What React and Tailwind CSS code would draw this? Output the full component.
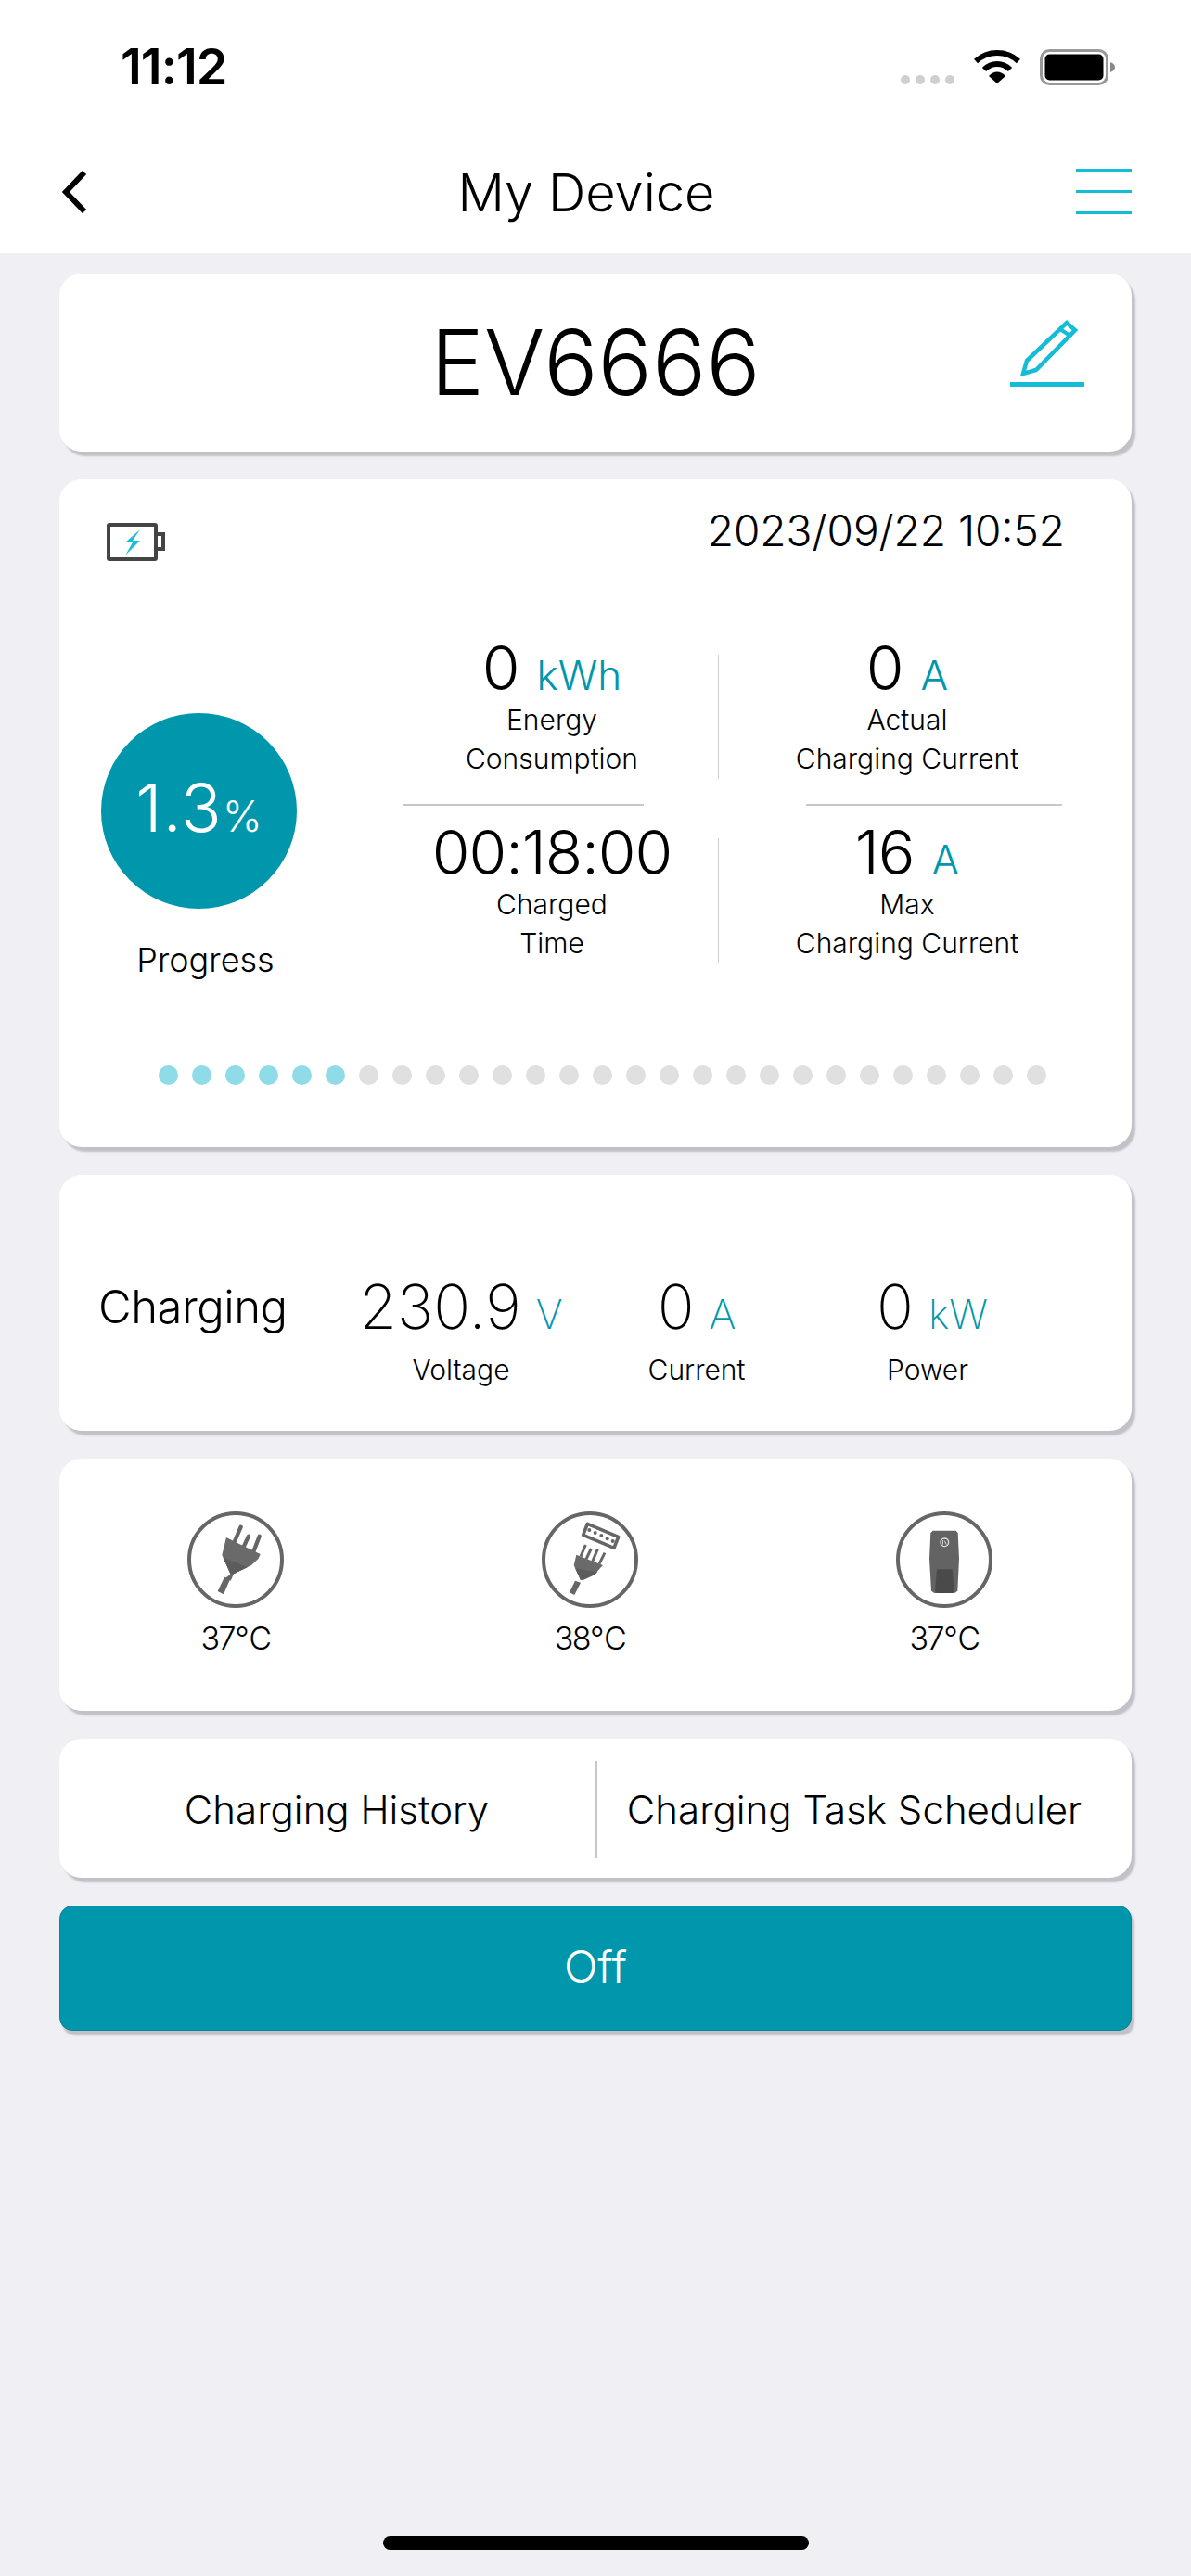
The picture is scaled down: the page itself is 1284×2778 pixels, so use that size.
import React from 'react';

const card = 'bg-white rounded-[24px] shadow-[4px_5px_2px_#c1c1c7]';

const Wifi = () => (
  <svg width="50" height="37" viewBox="0 0 50 37">
    <path d="M2 13 C15 1 35 1 48 13" fill="none" stroke="#000" strokeWidth="6" />
    <path d="M11 22 C19 14 31 14 39 22" fill="none" stroke="#000" strokeWidth="6" />
    <path d="M16 29 C21 23 29 23 34 29 L25 37 Z" fill="#000" />
  </svg>
);

const StatusBattery = () => (
  <svg width="81" height="39" viewBox="0 0 81 39">
    <rect x="1.5" y="1.5" width="71" height="36" rx="9" fill="none" stroke="#999" strokeWidth="3" />
    <rect x="5.5" y="5.5" width="63" height="28" rx="5" fill="#000" />
    <path d="M76 14 C79 15 81 17 81 19.5 C81 22 79 24 76 25 Z" fill="#888" />
  </svg>
);

const Chevron = () => (
  <svg width="30" height="48" viewBox="0 0 30 48">
    <path d="M25 3 L5 24 L25 45" fill="none" stroke="#000" strokeWidth="6" />
  </svg>
);

const Menu = () => (
  <div className="flex flex-col gap-[20px] w-[60px]">
    <div className="h-[3px] bg-[#14bcd6]" />
    <div className="h-[3px] bg-[#14bcd6]" />
    <div className="h-[3px] bg-[#14bcd6]" />
  </div>
);

const Pencil = () => (
  <svg width="80" height="75" viewBox="0 0 80 75">
    <path d="M18 47 L61 6 L70 14 L28 57 L14 61 Z" fill="none" stroke="#14bcd6" strokeWidth="4.5" />
    <path d="M54 13 L66 21" fill="none" stroke="#14bcd6" strokeWidth="4" />
    <rect x="0" y="70" width="80" height="5" fill="#14bcd6" />
  </svg>
);

const BatteryIcon = () => (
  <svg width="66" height="46" viewBox="0 0 66 46">
    <rect x="3" y="5" width="51" height="37" rx="1" fill="none" stroke="#444" strokeWidth="4" />
    <path d="M55 15 H62 V31 H55" fill="none" stroke="#444" strokeWidth="4" />
    <path d="M37 10 L21 24 H29 L21 38 L37 22 H29 Z" fill="#1fbcd8" />
  </svg>
);

const PlugIcon = () => (
  <svg width="104" height="104" viewBox="128 88 312 312">
    <circle cx="284" cy="244" r="150" fill="none" stroke="#666" strokeWidth="12" />
    <g stroke="#666" strokeWidth="13" strokeLinecap="round" fill="none">
      <path d="M301 138 L282 182" />
      <path d="M326 168 L311 200" />
      <path d="M361 168 L342 218" />
    </g>
    <path d="M254 172 L364 226 L358 240 L335 262 L282 288 L268 292 L240 228 L248 196 Z" fill="#6a6a6a" />
    <path d="M243 236 L322 269 L282 288 L268 292 Z" fill="#5c5c5c" />
    <path d="M268 290 L280 285 L268 312 L250 305 Z" fill="#666" />
    <path d="M248 300 L266 308 L245 356 L226 346 Z" fill="#666" />
  </svg>
);

const PinIcon = () => (
  <svg width="104" height="104" viewBox="132 88 312 312">
    <circle cx="288" cy="244" r="150" fill="none" stroke="#666" strokeWidth="12" />
    <path d="M280 128 L380 170 L366 206 L266 164 Z" fill="none" stroke="#666" strokeWidth="11" strokeLinejoin="round" />
    <g fill="#666">
      <circle cx="286" cy="148" r="6" />
      <circle cx="305" cy="157" r="6" />
      <circle cx="325" cy="166" r="6" />
      <circle cx="344" cy="176" r="6" />
      <circle cx="362" cy="184" r="6" />
    </g>
    <g stroke="#666" strokeWidth="9" fill="none">
      <path d="M274 196 L258 234" />
      <path d="M292 208 L276 242" />
      <path d="M313 210 L296 250" />
      <path d="M336 222 L318 258" />
    </g>
    <path d="M244 228 L330 262 L322 270 L304 292 L270 308 L258 310 L236 262 Z" fill="#6a6a6a" />
    <path d="M240 272 L312 284 L304 292 L270 308 L258 310 Z" fill="#5c5c5c" />
    <path d="M240 312 L258 318 L238 358 L222 350 Z" fill="#666" />
  </svg>
);

const WallboxIcon = () => (
  <svg width="104" height="104" viewBox="136 88 312 312">
    <circle cx="292" cy="244" r="150" fill="none" stroke="#666" strokeWidth="12" />
    <path d="M255 150 H330 L336 158 L340 240 L335 345 L325 352 H260 L250 345 L244 240 L248 158 Z" fill="#636363" />
    <path d="M268 275 H318 L324 345 L318 352 H268 L262 345 Z" fill="#4a4a4a" />
    <circle cx="293" cy="188" r="13" fill="none" stroke="#ddd" strokeWidth="4" />
    <path d="M287 181 V195 M293 183 L299 195" stroke="#ddd" strokeWidth="3" fill="none" />
  </svg>
);

const StatCell = ({ value, unit, line1, line2 }) => (
  <div className="flex flex-col items-center">
    <div className="h-[62px] flex items-baseline justify-center leading-[62px] whitespace-nowrap">
      <span className="text-[66px] font-[350] tracking-[-1px] text-black">{value}</span>
      {unit && <span className="text-[44px] font-light text-[#0096ac] ml-[19px]">{unit}</span>}
    </div>
    <div className="text-[30px] leading-[42px] text-black font-[350] text-center mt-[4px] whitespace-nowrap">
      {line1}
      <br />
      {line2}
    </div>
  </div>
);

const Reading = ({ value, unit, label, className, labelClass = '' }) => (
  <div className={`flex flex-col items-center ${className}`}>
    <div className="flex items-baseline leading-[64px]">
      <span className="text-[66px] font-extralight text-black">{value}</span>
      <span className="text-[44px] font-extralight text-[#0096ac] ml-[16px]">{unit}</span>
    </div>
    <div className={`text-[30px] leading-[40px] font-[350] text-black mt-[8px] ${labelClass}`}>{label}</div>
  </div>
);

const Temp = ({ icon, value }) => (
  <div className="w-[104px] flex flex-col items-center">
    {icon}
    <div className="text-[34px] leading-[44px] font-light tracking-[-1.5px] text-black mt-[11px] whitespace-nowrap">{value}</div>
  </div>
);

const App = () => {
  const dots = Array.from({ length: 27 }, (_, i) => i);

  return (
    <div className="w-[1284px] h-[2778px] bg-[#efeff4] flex flex-col overflow-hidden font-['Inter','Noto_Sans',sans-serif]">
      {/* status bar + nav */}
      <div className="h-[273px] bg-white shrink-0">
        <div className="h-[146px] pl-[130px] pr-[82px] flex items-start justify-between">
          <div className="text-[54px] leading-[60px] font-semibold tracking-[-1px] text-black mt-[42px]">11:12</div>
          <div className="flex items-start mt-[53px]">
            <div className="flex gap-[6px] mt-[28px] mr-[21px]">
              <div className="w-[10px] h-[10px] rounded-full bg-[#cfcfcf]" />
              <div className="w-[10px] h-[10px] rounded-full bg-[#cfcfcf]" />
              <div className="w-[10px] h-[10px] rounded-full bg-[#cfcfcf]" />
              <div className="w-[10px] h-[10px] rounded-full bg-[#cfcfcf]" />
            </div>
            <Wifi />
            <div className="ml-[21px]">
              <StatusBattery />
            </div>
          </div>
        </div>
        <div className="h-[127px] pl-[66px] pr-[64px] flex items-start justify-between">
          <div className="mt-[37px]"><Chevron /></div>
          <div className="text-[56px] leading-[68px] font-[350] text-black mt-[28px] ml-[8px]">My Device</div>
          <div className="mt-[36px]"><Menu /></div>
        </div>
      </div>

      <div className="px-[64px] pt-[22px] flex flex-col gap-[30px]">
        {/* device name */}
        <div className={`${card} h-[192px] relative flex items-center justify-center`}>
          <div className="text-[97px] leading-[110px] font-[350] text-black">EV6666</div>
          <div className="absolute right-[51px] top-[47px]"><Pencil /></div>
        </div>

        {/* charging progress */}
        <div className={`${card} h-[720px] flex flex-col`}>
          <div className="flex items-start justify-between pl-[50px] pr-[72px] pt-[44px] h-[175px]">
            <BatteryIcon />
            <div className="text-[46px] leading-[54px] font-[350] text-black mt-[-16px]">2023/09/22 10:52</div>
          </div>
          <div className="flex items-start pl-[45px]">
            <div className="w-[211px] flex flex-col items-center mt-[77px]">
              <div className="w-[211px] h-[211px] rounded-full bg-[#0096ac] text-white font-light flex items-baseline justify-center pt-[60px]">
                <span className="text-[72px] leading-[84px] tracking-[1px]">1.3</span>
                <span className="text-[46px] leading-[84px]">%</span>
              </div>
              <div className="text-[36px] leading-[44px] font-[350] text-black mt-[33px] ml-[14px]">Progress</div>
            </div>
            <div className="ml-[114px] w-[711px] flex flex-col">
              <div className="flex items-stretch h-[148px]">
                <div className="w-[322px] mt-[-3px]">
                  <StatCell value="0" unit="kWh" line1="Energy" line2="Consumption" />
                </div>
                <div className="w-[1px] bg-[#cccccc] ml-[18px] mt-[14px]" />
                <div className="flex-1 mt-[-3px] pl-[36px]">
                  <StatCell value="0" unit="A" line1="Actual" line2="Charging Current" />
                </div>
              </div>
              <div className="flex justify-between mt-[27px]">
                <div className="w-[260px] h-[2px] bg-[#c8c8c8]" />
                <div className="w-[276px] h-[2px] bg-[#c8c8c8]" />
              </div>
              <div className="flex items-stretch h-[171px] mt-[19px]">
                <div className="w-[322px]">
                  <StatCell value="00:18:00" line1="Charged" line2="Time" />
                </div>
                <div className="w-[1px] bg-[#cccccc] ml-[18px] mt-[16px] mb-[20px]" />
                <div className="flex-1 pl-[36px]">
                  <StatCell value="16" unit="A" line1="Max" line2="Charging Current" />
                </div>
              </div>
            </div>
          </div>
          <div className="flex gap-[15px] pl-[107px] mt-[90px]">
            {dots.map((i) => (
              <div key={i} className={`w-[21px] h-[21px] rounded-full ${i < 6 ? 'bg-[#8fdce8]' : 'bg-[#e0e0e0]'}`} />
            ))}
          </div>
        </div>

        {/* live readings */}
        <div className={`${card} h-[276px] flex items-start pl-[42px] pt-[114px]`}>
          <div className="text-[49px] leading-[60px] font-[350] text-black w-[281px] mt-[-1px] tracking-[-0.5px]">Charging</div>
          <Reading className="w-[220px] mt-[-4px]" value="230.9" unit="V" label="Voltage" />
          <Reading className="w-[140px] ml-[74px] mt-[-4px]" value="0" unit="A" label="Current" />
          <Reading className="w-[140px] ml-[114px] mt-[-4px]" value="0" unit="kW" label="Power" labelClass="mr-[10px]" />
        </div>

        {/* temperatures */}
        <div className={`${card} h-[272px] flex items-start pl-[138px] pt-[57px] gap-[278px]`}>
          <Temp icon={<PlugIcon />} value="37℃" />
          <Temp icon={<PinIcon />} value="38℃" />
          <Temp icon={<WallboxIcon />} value="37℃" />
        </div>

        {/* links */}
        <div className={`${card} h-[150px] flex items-center`}>
          <div className="w-[578px] pl-[20px] text-center text-[42px] leading-[50px] font-[350] text-black mt-[4px]">Charging History</div>
          <div className="w-[2px] h-[105px] bg-[#c8c8c8] mt-[2px]" />
          <div className="flex-1 pr-[22px] text-center text-[42px] leading-[50px] font-[350] text-black whitespace-nowrap mt-[4px]">Charging Task Scheduler</div>
        </div>

        {/* power button */}
        <div className="h-[135px] bg-[#0096ac] border border-[#0a8496] rounded-[14px] shadow-[3px_5px_2px_#c1c1c7] flex items-center justify-center text-white text-[48px] font-light pb-[3px]">
          Off
        </div>
      </div>

      <div className="mt-auto pb-[28px] flex justify-center">
        <div className="w-[459px] h-[15px] rounded-full bg-black" />
      </div>
    </div>
  );
};

export default App;
